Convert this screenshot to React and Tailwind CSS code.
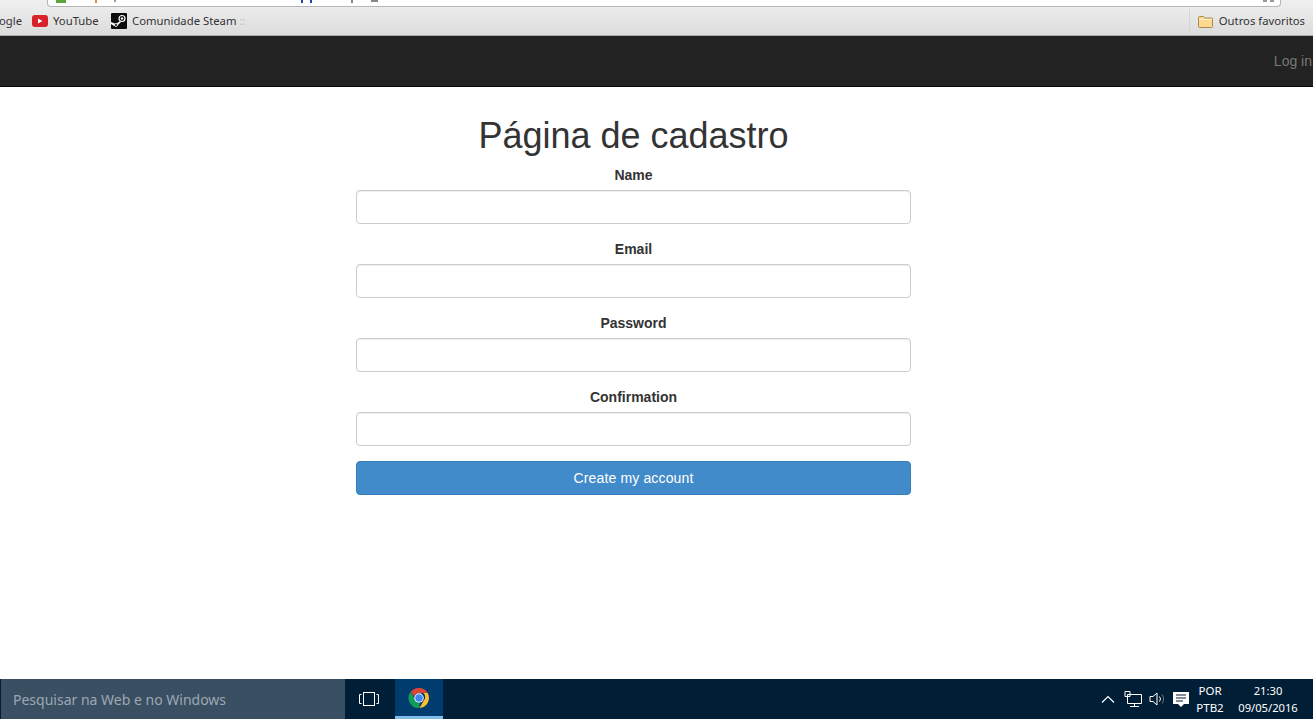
import React from "react";

const SANS = "font-['Liberation_Sans',Arial,sans-serif]";
const UI = "font-['Noto_Sans','Open_Sans',sans-serif]";

function Field({ label }) {
  return (
    <div className="mb-[15px]">
      <label className="block h-5 mb-[5px] text-center text-sm leading-5 font-bold text-[#333]">{label}</label>
      <input className="block w-full h-[34px] rounded border border-[#ccc] bg-white shadow-[inset_0_1px_1px_rgba(0,0,0,0.075)]" />
    </div>
  );
}

function Chrome() {
  return (
    <svg width="24" height="24" viewBox="0 0 48 48">
      <path d="M24 4a20 20 0 0 1 17.3 10H24a10 10 0 0 0-9.6 7.2L7.5 11.6A20 20 0 0 1 24 4z" fill="#db4437" />
      <path d="M41.3 14A20 20 0 0 1 25 44l8.6-15a10 10 0 0 0-1-15z" fill="#fbc02d" />
      <path d="M7.5 11.6 16 26.5a10 10 0 0 0 9 7.5L25 44A20 20 0 0 1 7.5 11.6z" fill="#0f9d58" />
      <circle cx="24" cy="24" r="9.5" fill="#fff" />
      <circle cx="24" cy="24" r="7.5" fill="#4285f4" />
    </svg>
  );
}

export default function App() {
  return (
    <div className={`flex flex-col h-[719px] w-[1313px] overflow-hidden bg-white ${SANS}`}>
      {/* browser bookmarks bar */}
      <div className="relative h-9 shrink-0 bg-gradient-to-b from-[#f0f0f0] to-[#dcdcdc] border-b border-[#a8a8a8] flex items-end pb-[4px] text-[11.3px] text-[#333]">
        <div className="absolute left-[47px] top-0 w-[1234px] h-[7px] bg-white border border-t-0 border-[#b5b5b5] rounded-b-sm overflow-hidden">
          <div className="absolute left-[8px] top-0 w-[10px] h-[3px] bg-[#5aa83c]" />
          <div className="absolute left-[47px] top-0 w-[2px] h-[3px] bg-[#d89a2b]" />
          <div className="absolute left-[66px] top-0 w-[2px] h-[2px] bg-[#999]" />
          <div className="absolute left-[253px] top-0 w-[2px] h-[3px] bg-[#2a3fb0]" />
          <div className="absolute left-[262px] top-0 w-[2px] h-[3px] bg-[#2a3fb0]" />
          <div className="absolute left-[303px] top-0 w-[2px] h-[3px] bg-[#888]" />
          <div className="absolute left-[323px] top-0 w-[7px] h-[2px] bg-[#888]" />
          <div className="absolute left-[1215px] top-0 w-[4px] h-[2px] bg-[#999]" />
          <div className="absolute left-[1222px] top-0 w-[4px] h-[2px] bg-[#999]" />
        </div>
        <div className={`flex items-center w-full h-[20px] ${UI}`}>
          <span className="w-[33px] -ml-[1px] text-right pr-[19px] shrink-0 overflow-hidden">
            <span className="inline-block -mr-1">ogle</span>
          </span>
          <svg width="16" height="12" viewBox="0 0 16 12" className="shrink-0">
            <rect width="16" height="12" rx="3" fill="#d9232a" />
            <path d="M6 3.5v5l4.5-2.5z" fill="#fff" />
          </svg>
          <span className="ml-[5px] w-[46px] shrink-0">YouTube</span>
          <svg width="16" height="16" viewBox="0 0 16 16" className="ml-[12px] shrink-0">
            <rect width="16" height="16" rx="1" fill="#0c0c0c" />
            <circle cx="11" cy="5.5" r="3" fill="none" stroke="#fff" strokeWidth="1.2" />
            <circle cx="11" cy="5.5" r="1.2" fill="#fff" />
            <path d="M0 9l5 2 4-3 1 1-4 4H3L0 11z" fill="#fff" />
            <circle cx="5" cy="12" r="1.5" fill="#0c0c0c" stroke="#fff" strokeWidth="0.8" />
          </svg>
          <span className="ml-[5px] w-[114px] shrink-0 whitespace-nowrap">
            Comunidade Steam <span className="text-[#bbb]">::</span>
          </span>
          <div className="flex-1" />
          <div className="w-px h-[24px] bg-[#d0d5da] mr-2" />
          <svg width="15" height="13" viewBox="0 0 15 13" className="shrink-0">
            <path d="M.5 2.5a1 1 0 0 1 1-1h4l1.5 1.5h6.5a1 1 0 0 1 1 1v7.5a1 1 0 0 1-1 1h-12a1 1 0 0 1-1-1z" fill="#fbd98f" stroke="#a98a4f" />
            <path d="M1 4.5h13" stroke="#fff2c8" />
          </svg>
          <span className="ml-[6px] mr-[8px] whitespace-nowrap">Outros favoritos</span>
        </div>
      </div>

      {/* navbar */}
      <nav className="h-[51px] shrink-0 bg-[#222] border-b border-[#080808] flex items-center justify-end pb-[1px] text-sm text-[#777]">
        <span className="mr-[1px]">Log in</span>
      </nav>

      {/* page */}
      <main className="flex-1 pl-[356px] pt-[29px]">
        <div className="w-[555px]">
          <h1 className="h-[40px] mb-[9px] text-center text-[36px] leading-[40px] font-normal text-[#333]">Página de cadastro</h1>
          <Field label="Name" />
          <Field label="Email" />
          <Field label="Password" />
          <Field label="Confirmation" />
          <button className="block w-full h-[34px] rounded bg-[#428bca] border border-[#357ebd] text-white text-sm tracking-[0.15px]">
            Create my account
          </button>
        </div>
      </main>

      {/* taskbar */}
      <footer className={`h-10 shrink-0 bg-[#001e36] flex items-stretch text-white ${UI}`}>
        <div className="ml-[1px] w-[344px] bg-[#3b4f62] flex items-center pl-3 pt-[2px] text-sm text-[#9ba8b3]">
          Pesquisar na Web e no Windows
        </div>
        <div className="w-[48px] flex items-center justify-center">
          <svg width="20" height="14" viewBox="0 0 20 14" fill="none" stroke="#fff">
            <rect x="4.5" y="0.5" width="11" height="13" />
            <path d="M2.5 2.5H.5v9h2M17.5 2.5h2v9h-2" />
          </svg>
        </div>
        <div className="ml-[2px] w-[48px] bg-[#003d6e] border-b-[3px] border-[#7fbce8] flex items-center justify-center">
          <Chrome />
        </div>
        <div className="flex-1" />
        <div className="flex items-center pr-[13px]">
          <svg width="14" height="8" viewBox="0 0 14 8" fill="none" stroke="#fff" strokeWidth="1.2" className="mr-[9px]">
            <path d="M1 7.5 7 1.5l6 6" />
          </svg>
          <svg width="18" height="16" viewBox="0 0 18 16" fill="none" stroke="#fff" className="mr-[7px]">
            <path d="M3.5 3.5h14v9h-14zM1 .5h5v5H1zM10.5 12.5v3M6 15.5h9" />
          </svg>
          <svg width="17" height="14" viewBox="0 0 17 14" fill="none" stroke="#fff" className="mr-[7px]">
            <path d="M1 4.5h3L8 1v12L4 9.5H1z" />
            <path d="M10.5 4.5a4 4 0 0 1 0 5" />
            <path d="M13 2.5a7 7 0 0 1 0 9" stroke="#777" />
          </svg>
          <svg width="16" height="15" viewBox="0 0 16 15" className="mr-[3px]">
            <path d="M0 0h16v12h-5l-3 3-3-3H0z" fill="#fff" />
            <path d="M3 3h10M3 6h10M3 9h7" stroke="#001e36" />
          </svg>
          <div className="w-[36px] shrink-0 text-center text-[11.5px] leading-[17px]">
            <div>POR</div>
            <div>PTB2</div>
          </div>
          <div className="w-[64px] shrink-0 ml-[8px] text-center text-[11.2px] leading-[17px]">
            <div>21:30</div>
            <div>09/05/2016</div>
          </div>
        </div>
      </footer>
    </div>
  );
}
